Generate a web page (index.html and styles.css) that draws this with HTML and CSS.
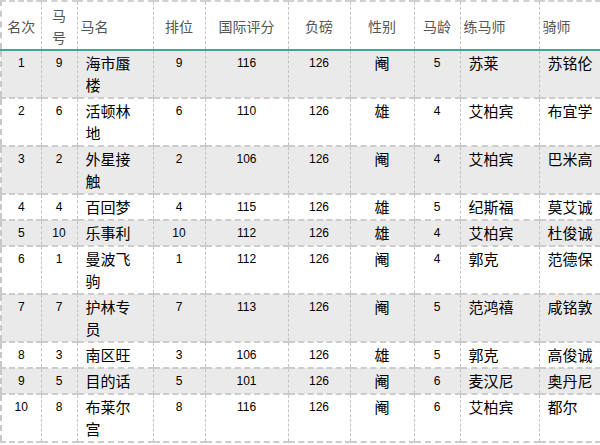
FILE: index.html
```html
<!DOCTYPE html>
<html lang="zh">
<head>
<meta charset="utf-8">
<link rel="stylesheet" href="styles.css">
</head>
<body>
<table class="race">
  <colgroup>
    <col class="c1"><col class="c2"><col class="c3"><col class="c4"><col class="c5">
    <col class="c6"><col class="c7"><col class="c8"><col class="c9"><col class="c10">
  </colgroup>
  <thead>
    <tr>
      <th>名次</th><th class="narrow">马号</th><th class="left">马名</th><th>排位</th><th>国际评分</th>
      <th>负磅</th><th>性别</th><th>马龄</th><th class="left">练马师</th><th class="left">骑师</th>
    </tr>
  </thead>
  <tbody>
    <tr class="odd"><td class="num">1</td><td class="num">9</td><td class="name">海市蜃楼</td><td class="num">9</td><td class="num">116</td><td class="num">126</td><td class="cn">阉</td><td class="num">5</td><td class="name">苏莱</td><td class="name">苏铭伦</td></tr>
    <tr><td class="num">2</td><td class="num">6</td><td class="name">活顿林地</td><td class="num">6</td><td class="num">110</td><td class="num">126</td><td class="cn">雄</td><td class="num">4</td><td class="name">艾柏宾</td><td class="name">布宜学</td></tr>
    <tr class="odd"><td class="num">3</td><td class="num">2</td><td class="name">外星接触</td><td class="num">2</td><td class="num">106</td><td class="num">126</td><td class="cn">阉</td><td class="num">4</td><td class="name">艾柏宾</td><td class="name">巴米高</td></tr>
    <tr><td class="num">4</td><td class="num">4</td><td class="name">百回梦</td><td class="num">4</td><td class="num">115</td><td class="num">126</td><td class="cn">雄</td><td class="num">5</td><td class="name">纪斯福</td><td class="name">莫艾诚</td></tr>
    <tr class="odd"><td class="num">5</td><td class="num">10</td><td class="name">乐事利</td><td class="num">10</td><td class="num">112</td><td class="num">126</td><td class="cn">雄</td><td class="num">4</td><td class="name">艾柏宾</td><td class="name">杜俊诚</td></tr>
    <tr><td class="num">6</td><td class="num">1</td><td class="name">曼波飞驹</td><td class="num">1</td><td class="num">112</td><td class="num">126</td><td class="cn">阉</td><td class="num">4</td><td class="name">郭克</td><td class="name">范德保</td></tr>
    <tr class="odd"><td class="num">7</td><td class="num">7</td><td class="name">护林专员</td><td class="num">7</td><td class="num">113</td><td class="num">126</td><td class="cn">阉</td><td class="num">5</td><td class="name">范鸿禧</td><td class="name">咸铭敦</td></tr>
    <tr><td class="num">8</td><td class="num">3</td><td class="name">南区旺</td><td class="num">3</td><td class="num">106</td><td class="num">126</td><td class="cn">雄</td><td class="num">5</td><td class="name">郭克</td><td class="name">高俊诚</td></tr>
    <tr class="odd"><td class="num">9</td><td class="num">5</td><td class="name">目的话</td><td class="num">5</td><td class="num">101</td><td class="num">126</td><td class="cn">阉</td><td class="num">6</td><td class="name">麦汉尼</td><td class="name">奥丹尼</td></tr>
    <tr><td class="num">10</td><td class="num">8</td><td class="name">布莱尔宫</td><td class="num">8</td><td class="num">116</td><td class="num">126</td><td class="cn">阉</td><td class="num">6</td><td class="name">艾柏宾</td><td class="name">都尔</td></tr>
  </tbody>
</table>
</body>
</html>
```
FILE: styles.css
```css
html, body {
  margin: 0;
  padding: 0;
  background: #ffffff;
}

.race {
  width: 600px;
  table-layout: fixed;
  border-collapse: collapse;
  font-family: "Liberation Sans", "Noto Sans CJK SC", sans-serif;
  border-top: 2px dashed #d0d0d0;
  border-left: 2px dashed #c8c8c8;
}

.c1 { width: 40px; }
.c2 { width: 36px; }
.c3 { width: 76px; }
.c4 { width: 52px; }
.c5 { width: 83px; }
.c6 { width: 62px; }
.c7 { width: 64px; }
.c8 { width: 46px; }
.c9 { width: 79px; }
.c10 { width: 62px; }

.race th {
  height: 47px;
  padding: 0 2px;
  font-family: "Noto Sans CJK SC", sans-serif;
  font-weight: normal;
  font-size: 14px;
  line-height: 22px;
  color: #555555;
  text-align: center;
  vertical-align: middle;
  border-left: 1px dashed #c4c4c4;
  border-bottom: 2px solid #3aa89a;
}

.race th.narrow {
  padding: 0 5px;
}

.race th.left {
  text-align: left;
  padding-left: 3px;
}

.race td {
  padding: 1px 2px;
  line-height: 22px;
  vertical-align: top;
  color: #000000;
  border-left: 1px dashed #c4c4c4;
  border-bottom: 2px dashed #cccccc;
}

.race tr.odd td {
  background: #eaeaea;
}

.race td.num {
  font-family: "Liberation Sans", sans-serif;
  font-size: 12px;
  text-align: center;
}

.race td.name {
  font-family: "Noto Sans CJK SC", sans-serif;
  font-size: 15px;
  text-align: left;
  padding-left: 8px;
  padding-right: 8px;
}

.race td.cn {
  font-family: "Noto Sans CJK SC", sans-serif;
  font-size: 15px;
  text-align: center;
}
```
